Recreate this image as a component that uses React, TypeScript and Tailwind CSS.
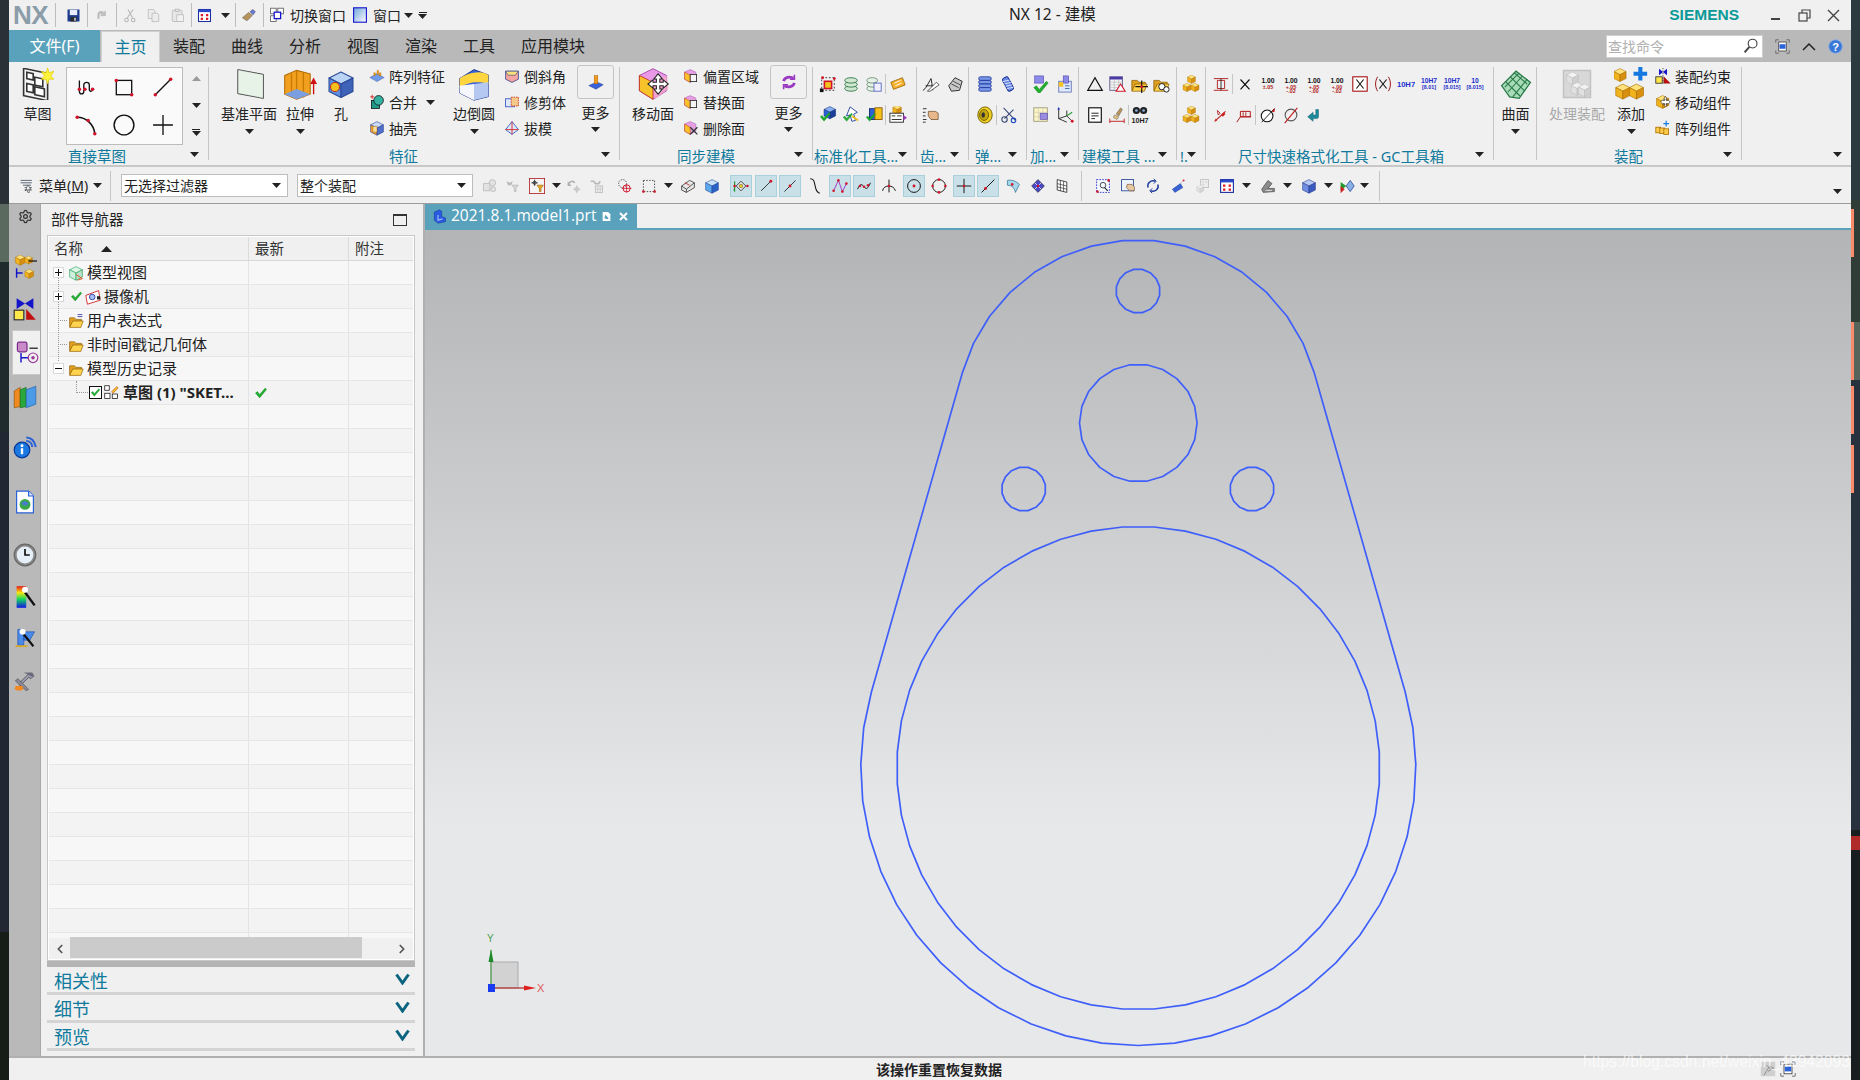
import React from 'react';
import { ChevronLeft, ChevronRight, Settings } from 'lucide-react';

type El = React.ReactNode;

const CJK = "font-['Noto_Sans','Noto_Sans_CJK_SC',sans-serif]";
const RED = '#d2142a';

const Cube = ({ t = '#ffe27a', l = '#f2b21c', r = '#d98f10', s = '#a86f00', x = 0, y = 0, k = 1 }: { t?: string; l?: string; r?: string; s?: string; x?: number; y?: number; k?: number }) => (
  <g transform={`translate(${x} ${y}) scale(${k})`} stroke={s} strokeWidth={0.7} strokeLinejoin="round">
    <polygon points="10,2 18,6 10,10 2,6" fill={t} />
    <polygon points="2,6 10,10 10,19 2,15" fill={l} />
    <polygon points="18,6 10,10 10,19 18,15" fill={r} />
  </g>
);

const Dot = ({ x, y, r = 1.6 }: { x: number; y: number; r?: number }) => <circle cx={x} cy={y} r={r} fill={RED} />;

const Check = ({ x = 0, y = 0, k = 1 }: { x?: number; y?: number; k?: number }) => (
  <path transform={`translate(${x} ${y}) scale(${k})`} d="M2 10l3-2 3 4 8-9 2 2-10 12z" fill="#1fae2e" stroke="#0d7a1a" strokeWidth={0.5} />
);

const Folder = ({ lines = false }: { lines?: boolean }) => (
  <>
    <path d="M2 6h6l2 2h7v3H6L3 17H2z" fill="#e0a020" stroke="#8a5a00" strokeWidth={0.8} />
    <path d="M6 10h13l-3 8H2z" fill="#ffd34d" stroke="#8a5a00" strokeWidth={0.8} />
    {lines && <path d="M12 2h6M12 4.5h6" stroke="#2a2a9a" strokeWidth={1} />}
  </>
);

const Tiny = ({ a, b, c, blue = false }: { a: string; b: string; c?: string; blue?: boolean }) => (
  <g fontFamily="Liberation Sans, sans-serif" fontWeight={700} textAnchor="middle">
    <text x="10" y="9" fontSize="7.5" fill={blue ? '#1c2ecc' : '#111'}>{a}</text>
    <text x="10" y="15" fontSize="6" fill={blue ? '#1c2ecc' : '#b01c1c'}>{b}</text>
    {c && <text x="10" y="20" fontSize="6" fill="#b01c1c">{c}</text>}
  </g>
);

const icons: Record<string, El> = {
  save: (
    <>
      <rect x="2" y="2" width="16" height="16" fill="#1c3a8a" />
      <rect x="5" y="2.5" width="10" height="7" fill="#e8eefc" />
      <rect x="6" y="12" width="8" height="6" fill="#2a2a2a" />
      <rect x="11" y="13" width="2" height="4" fill="#ddd" />
    </>
  ),
  undo: <path d="M4 15V9c0-3 3-5 6-4l3 1 2-2v7h-7l2-2-2-1c-1 0-2 1-2 2v5z" fill="#bfc0c0" stroke="#a8a8a8" strokeWidth={0.6} />,
  cut: (
    <g stroke="#b5b5b5" fill="none" strokeWidth={1.4}>
      <path d="M15 2L7 13M8 2l6 11" />
      <circle cx="6" cy="16" r="2.4" />
      <circle cx="15" cy="16" r="2.4" />
    </g>
  ),
  copy: (
    <g stroke="#b5b5b5" fill="#ececec">
      <path d="M3 2h7l2 2v10H3z" />
      <path d="M8 7h7l2 2v9H8z" />
    </g>
  ),
  paste: (
    <g stroke="#b5b5b5" fill="#e6e6e6">
      <rect x="3" y="3" width="13" height="15" rx="1" />
      <rect x="7" y="1.5" width="5" height="3" />
      <path d="M9 9h9v9H9z" fill="#f2f2f2" />
    </g>
  ),
  win: (
    <>
      <rect x="2" y="2" width="16" height="16" fill="#fff" stroke="#1a2fa0" strokeWidth={1.4} />
      <rect x="2" y="2" width="16" height="3.5" fill="#2a48c8" />
      <path d="M5 8h3v3H5zM12 8h3v3h-3zM5 13h3v3H5zM12 13h3v3h-3z" fill="#e02020" />
    </>
  ),
  brush: (
    <>
      <path d="M2 13l8-7 5 4-7 7z" fill="#b8935a" stroke="#555" strokeWidth={0.7} />
      <path d="M12 5l4-3 3 3-3 4z" fill="#6a7ee0" stroke="#334" strokeWidth={0.7} />
    </>
  ),
  switchwin: (
    <>
      <rect x="2" y="1.5" width="7" height="7" fill="#fff" stroke="#555" />
      <rect x="11" y="1.5" width="7" height="7" fill="#fff" stroke="#555" />
      <rect x="2" y="11" width="7" height="7" fill="#fff" stroke="#555" />
      <rect x="6.5" y="6.5" width="8" height="8" fill="#fff" stroke="#1414d0" strokeWidth={1.6} />
    </>
  ),
  winblue: (
    <>
      <defs>
        <linearGradient id="wb" x1="0" y1="0" x2="1" y2="1">
          <stop offset="0" stopColor="#6fa4d8" />
          <stop offset="1" stopColor="#fff" />
        </linearGradient>
      </defs>
      <rect x="2" y="1" width="16" height="18" fill="url(#wb)" stroke="#1414d0" strokeWidth={1.4} />
    </>
  ),
  sketch: (
    <>
      <g transform="skewY(12)" stroke="#333" fill="#f4f4f4">
        <rect x="1" y="0" width="15" height="17" />
        <rect x="3" y="2" width="4" height="4" fill="#fff" />
        <rect x="8" y="4" width="5" height="5" fill="#fff" />
        <rect x="3" y="9" width="4" height="5" fill="#fff" />
        <rect x="8" y="10" width="6" height="5" fill="#fff" />
      </g>
      <path d="M16 0l1 3 3-1-2 3 2 2-3 0-1 3-1-3-3 0 2-2-2-3 3 1z" fill="#fff23a" stroke="#d9c400" strokeWidth={0.4} />
    </>
  ),
  spline: (
    <>
      <path d="M4 4v10c0 3 4 3 4 0V8c0-3 5-3 5 0v4c0 3 3 2 3 0" fill="none" stroke="#111" strokeWidth={1.2} />
      <Dot x={4} y={12} /><Dot x={9} y={12} /><Dot x={16} y={12} />
    </>
  ),
  rect: (
    <>
      <rect x="3" y="4" width="14" height="13" fill="none" stroke="#111" strokeWidth={1.2} />
      <Dot x={3} y={4} /><Dot x={17} y={17} />
    </>
  ),
  line: (
    <>
      <path d="M3 17L17 3" stroke="#111" strokeWidth={1.2} />
      <Dot x={3} y={17} /><Dot x={17} y={3} />
    </>
  ),
  arc: (
    <>
      <path d="M2 3c8 0 15 6 16 15" fill="none" stroke="#111" strokeWidth={1.4} />
      <Dot x={2} y={3} /><Dot x={12} y={6} /><Dot x={18} y={18} />
    </>
  ),
  circle: <circle cx="10" cy="10" r="9" fill="none" stroke="#111" strokeWidth={1.3} />,
  plus: <path d="M10 1v18M1 10h18" stroke="#111" strokeWidth={1.2} />,
  plane: (
    <>
      <polygon points="3,1 19,4 19,19 3,16" fill="#dbeedb" stroke="#333" strokeWidth={0.6} />
      <polygon points="3,1 19,4 19,19 3,16" fill="#fff" opacity={0.3} />
    </>
  ),
  extrude: (
    <>
      <polygon points="1,5 8,2 16,4 16,16 8,19 1,16" fill="#f2a020" stroke="#b36a00" strokeWidth={0.6} />
      <path d="M8 2v17M5 4v14M12 3v15" stroke="#c97a00" strokeWidth={0.8} />
      <polygon points="1,16 8,19 16,16 8,13" fill="#7a9ee0" />
      <path d="M18 16V8m-1.6 2l1.6-3 1.6 3" stroke="#d01010" fill="#d01010" strokeWidth={0.8} />
    </>
  ),
  hole: (
    <>
      <Cube t="#b9d4f4" l="#5f8ee0" r="#3d62b8" s="#2a4a98" />
      <circle cx="6" cy="12" r="3" fill="#f6c21c" stroke="#c03018" strokeWidth={0.7} />
    </>
  ),
  pattern: (
    <>
      <polygon points="1,12 10,7 19,12 10,17" fill="#6f9be8" stroke="#2a4a98" strokeWidth={0.5} />
      <path d="M6 10V6h2v3zM10 8V3h2v5zM13 10V6h2v4z" fill="#f29a1c" stroke="#a86000" strokeWidth={0.4} />
    </>
  ),
  unite: (
    <>
      <path d="M4 1v5M1.5 3.5h5" stroke="#d01010" />
      <rect x="3" y="8" width="10" height="10" fill="#1f9a8a" stroke="#111" />
      <circle cx="12" cy="8" r="6" fill="#34b0a0" stroke="#111" />
    </>
  ),
  shell: (
    <>
      <Cube t="#c9d8f4" l="#f0a030" r="#4f6fc8" s="#26408a" />
      <rect x="5" y="8" width="5" height="7" fill="#f8e0a0" stroke="#a86000" strokeWidth={0.5} />
    </>
  ),
  blend: (
    <>
      <polygon points="2,7 10,2 18,5 18,17 10,19 2,15" fill="#3a62d8" stroke="#1d3488" strokeWidth={0.5} />
      <path d="M2 7c4-3 12-5 16-2v5c-5-2-12-1-16 2z" fill="#ffd640" />
      <polygon points="2,11 10,10 10,19 2,15" fill="#fff" opacity={0.95} />
      <polygon points="10,10 18,9 18,17 10,19" fill="#b5c8f2" />
    </>
  ),
  chamfer: (
    <>
      <polygon points="2,4 18,4 18,14 10,18 2,14" fill="#f6a6a0" stroke="#1d3488" strokeWidth={0.9} />
      <polygon points="2,4 18,4 14,9 5,9" fill="#ffe27a" stroke="#1d3488" strokeWidth={0.7} />
    </>
  ),
  trim: (
    <>
      <rect x="2" y="6" width="11" height="10" fill="#dfe7fb" stroke="#2a4ac0" />
      <rect x="9" y="4" width="9" height="11" fill="#f6c98a" stroke="#c03018" strokeDasharray="2 1" />
    </>
  ),
  draft: (
    <>
      <polygon points="10,2 18,12 10,18 2,12" fill="#dfe7fb" stroke="#2a4ac0" />
      <path d="M10 2v16M2 12h16" stroke="#d01010" strokeWidth={1} />
    </>
  ),
  more1: (
    <>
      <polygon points="2,14 11,10 18,13 10,18" fill="#3a62d8" stroke="#1d3488" strokeWidth={0.5} />
      <rect x="8" y="3" width="4" height="9" fill="#f29a1c" stroke="#a86000" strokeWidth={0.5} />
    </>
  ),
  moveface: (
    <>
      <polygon points="10,1 18,5 18,14 10,19 2,14 2,5" fill="#e89ae6" stroke="#a03aa8" strokeWidth={0.5} />
      <polygon points="2,5 10,9 10,19 2,14" fill="#f8c22a" stroke="#c03018" strokeWidth={0.5} />
      <polygon points="10,9 18,5 19,13 11,19" fill="#f4a6c8" opacity={0.8} />
      <path d="M14 7l2.5 3h-1.5v2h2v-1.5l3 2.5-3 2.5V14h-2v2h1.5L14 19l-2.5-3H13v-2h-2v1.5L8 13l3-2.500V12h2v-2h-1.500z" fill="#fff" stroke="#222" strokeWidth={0.6} transform="translate(-1 -3)" />
    </>
  ),
  facecube: (
    <>
      <polygon points="9,2 16,5 16,14 9,18 2,14 2,5" fill="#e4a0e0" stroke="#a03aa8" strokeWidth={0.5} />
      <polygon points="2,5 9,9 9,18 2,14" fill="#f8c22a" stroke="#c03018" strokeWidth={0.6} />
      <rect x="9" y="8" width="8" height="9" fill="#f4f4f4" stroke="#222" strokeWidth={1} />
    </>
  ),
  delface: (
    <>
      <polygon points="9,2 16,5 16,14 9,18 2,14 2,5" fill="#e4a0e0" stroke="#a03aa8" strokeWidth={0.5} />
      <polygon points="2,5 9,9 9,18 2,14" fill="#f8c22a" stroke="#c03018" strokeWidth={0.6} />
      <path d="M9 9l9 9M18 9l-9 9" stroke="#333" strokeWidth={1.6} />
    </>
  ),
  refresh: (
    <g fill="none" stroke="#9a3ac0" strokeWidth={3}>
      <path d="M4 9c1-4 7-6 11-3" />
      <path d="M16 11c-1 4-7 6-11 3" />
      <path d="M16 2v5h-5M4 18v-5h5" strokeWidth={1.8} />
    </g>
  ),
  redbox: (
    <>
      <rect x="3" y="3" width="14" height="14" fill="none" stroke="#333" strokeDasharray="2 2" />
      <rect x="6" y="7" width="8" height="8" fill="#f6c21c" stroke={RED} strokeWidth={1.8} />
      <rect x="1" y="15" width="4" height="4" fill="#111" />
      <Dot x={4} y={3} /><Dot x={17} y={4} />
    </>
  ),
  stack: (
    <g fill="#cfe8cf" stroke="#1f6a3a" strokeWidth={0.9}>
      <ellipse cx="10" cy="15" rx="7" ry="3" />
      <ellipse cx="10" cy="10.500" rx="7" ry="3" />
      <ellipse cx="10" cy="6" rx="7" ry="3" />
    </g>
  ),
  stack2: (
    <>
      <g fill="#e6f0e6" stroke="#4a7a5a" strokeWidth={0.8}>
        <ellipse cx="8" cy="15" rx="6" ry="3" />
        <ellipse cx="8" cy="10.500" rx="6" ry="3" />
        <ellipse cx="8" cy="6" rx="6" ry="3" />
      </g>
      <rect x="10" y="9" width="8" height="9" fill="#eef" stroke="#5a6ac0" />
    </>
  ),
  tag: (
    <>
      <path d="M2 8l13-5 3 8-13 5z" fill="#f6b02c" stroke="#8a5a00" strokeWidth={0.8} />
      <path d="M6 9l7-3M7 12l7-3" stroke="#fff" />
    </>
  ),
  bluecheck: (
    <>
      <Cube t="#8ab0f4" l="#2a62d8" r="#1d3e98" s="#102a70" x={4} y={-1} k={0.8} />
      <Check y={5} k={0.7} />
    </>
  ),
  axecheck: (
    <>
      <path d="M9 1l8 6-4 2 2 7-4 1-2-7-4 1z" fill="#fff" stroke="#1d3e98" />
      <path d="M11 11l7 5" stroke="#f0c020" strokeWidth={2} />
      <Check y={6} k={0.65} />
    </>
  ),
  cubecheck: (
    <>
      <rect x="5" y="3" width="8" height="12" fill="#2a62d8" stroke="#102a70" />
      <rect x="11" y="2" width="8" height="13" fill="#f6c21c" stroke="#8a5a00" />
      <Check y={6} k={0.65} />
    </>
  ),
  calc: (
    <>
      <Cube x={3} y={-2} k={0.6} />
      <rect x="1" y="8" width="15" height="10" fill="#fff" stroke="#222" />
      <path d="M3 11h4M9 11h5M3 15h11" stroke="#222" />
      <polygon points="16,10 20,13 16,16" fill="#a03ac0" />
    </>
  ),
  pen: (
    <>
      <path d="M1 17c3-1 6-8 9-13 1 3 1 8 2 13" fill="none" stroke="#222" strokeWidth={1.1} />
      <path d="M4 12h9" stroke="#222" />
      <path d="M6 18L16 8l3 3-10 7z" fill="#fff" stroke="#222" strokeWidth={0.8} />
    </>
  ),
  gearpen: (
    <>
      <polygon points="3,12 10,3 18,7 15,17 6,18" fill="#c8c8c8" stroke="#222" strokeWidth={1} />
      <path d="M6 10l8 4M8 7l8 4" stroke="#222" strokeWidth={0.8} />
    </>
  ),
  hand: (
    <>
      <path d="M1 3h4M1 7h3M1 11h3M1 15h4M1 18h3" stroke="#222" />
      <path d="M7 6h8l3 2v7h-8l-3-4z" fill="#e8b88a" stroke="#6a4a2a" strokeWidth={0.8} />
    </>
  ),
  coil: (
    <g fill="#7a9ae8" stroke="#1a2f98" strokeWidth={0.9}>
      <rect x="3" y="2" width="14" height="4" rx="2" />
      <rect x="3" y="6" width="14" height="4" rx="2" />
      <rect x="3" y="10" width="14" height="4" rx="2" />
      <rect x="3" y="14" width="14" height="4" rx="2" />
    </g>
  ),
  spring: (
    <g transform="rotate(-28 10 10)">
      <rect x="6.500" y="2" width="7" height="16" rx="2" fill="#6a8ae4" stroke="#1a2f98" />
      <path d="M6.500 5l7 2M6.500 8l7 2M6.500 11l7 2M6.500 14l7 2" stroke="#dfe7fb" />
    </g>
  ),
  washer: (
    <>
      <ellipse cx="10" cy="10" rx="8" ry="9" fill="#f0d020" stroke="#6a5a00" />
      <ellipse cx="9" cy="10" rx="5" ry="6" fill="#c8a810" stroke="#6a5a00" />
      <ellipse cx="8" cy="10" rx="2" ry="3" fill="#333" />
    </>
  ),
  scissor: (
    <g fill="none" stroke="#3a4a78" strokeWidth={1.2}>
      <path d="M4 2l13 14M15 4L5 14" />
      <circle cx="5" cy="15" r="3" />
      <circle cx="15" cy="16" r="2.500" stroke="#1a4ac0" />
    </g>
  ),
  vcheck: (
    <>
      <rect x="3" y="1" width="10" height="8" fill="#8a8ae8" stroke="#4a3aa8" strokeWidth={0.6} />
      <Check y={4} k={1} />
    </>
  ),
  clip: (
    <>
      <rect x="3" y="7" width="14" height="12" fill="#dfe7fb" stroke="#6a7ab8" />
      <rect x="8" y="1" width="6" height="8" fill="#8a8ae8" stroke="#4a3aa8" strokeWidth={0.6} />
      <rect x="3" y="8" width="5" height="5" fill="#f6c21c" />
      <path d="M10 12h5M10 15h5" stroke="#3a6a9a" />
    </>
  ),
  gridp: (
    <>
      <rect x="2" y="2" width="15" height="15" fill="#fff6c8" stroke="#9a9a7a" />
      <path d="M2 7h15M2 12h15M7 2v15M12 2v15" stroke="#c8c8b0" strokeWidth={0.7} />
      <rect x="9" y="8" width="8" height="7" fill="#9a8ae0" stroke="#4a3aa8" strokeWidth={0.6} />
    </>
  ),
  axes3: (
    <>
      <path d="M3 3v11l9-3 6 6M3 14l9 4M12 11V5" fill="none" stroke="#222" strokeWidth={1} />
      <path d="M12 11l6-4" stroke="#1f9a2e" strokeWidth={1.2} />
      <Dot x={18} y={17} /><path d="M3 1l-1.500 3h3z" fill="#1a2fc8" />
    </>
  ),
  tri: <polygon points="10,3 18,17 2,17" fill="none" stroke="#111" strokeWidth={1.4} />,
  table: (
    <>
      <rect x="2" y="2" width="14" height="15" fill="#f5f5f5" stroke="#5a5a8a" />
      <rect x="2" y="2" width="14" height="3" fill="#4a3aa8" />
      <path d="M2 8h14M2 11h14M2 14h14M7 5v12M12 5v12" stroke="#aaa" strokeWidth={0.6} />
      <polygon points="14,10 19,18 9,18" fill="#fff" stroke={RED} strokeWidth={1.200} />
    </>
  ),
  foldx: (
    <>
      <Folder />
      <path d="M6 13h14M13 6v14" stroke="#111" strokeWidth={1.3} />
      <Dot x={13} y={13} />
    </>
  ),
  foldc: (
    <>
      <Folder />
      <circle cx="11" cy="13" r="3.500" fill="#fff" stroke="#111" />
      <circle cx="16" cy="16" r="3" fill="#fff" stroke="#111" />
    </>
  ),
  note: (
    <>
      <rect x="3" y="2" width="14" height="16" fill="#fff" stroke="#111" strokeWidth={1.3} />
      <path d="M6 8h8M6 11h8M6 14h4" stroke="#111" />
    </>
  ),
  brushdim: (
    <>
      <path d="M9 9l5-7 2 2-4 7z" fill="#b8935a" stroke="#555" strokeWidth={0.5} />
      <path d="M7 10l5 2-2 3-4-2z" fill="#e8c07a" stroke="#555" strokeWidth={0.5} />
      <path d="M2 14v5M18 14v5M2 17h16" stroke="#c01818" />
    </>
  ),
  bino: (
    <>
      <circle cx="6" cy="5" r="4" fill="#222" />
      <circle cx="14" cy="5" r="4" fill="#222" />
      <circle cx="6" cy="5" r="1.500" fill="#8ab0e8" />
      <circle cx="14" cy="5" r="1.500" fill="#8ab0e8" />
      <text x="10" y="19" fontSize="8" fontWeight={700} textAnchor="middle" fontFamily="Liberation Sans, sans-serif" fill="#222">10H7</text>
    </>
  ),
  gold: (
    <>
      <Cube x={5} y={-1} k={0.55} />
      <Cube x={0} y={8} k={0.55} />
      <Cube x={9} y={8} k={0.55} />
    </>
  ),
  dimI: (
    <>
      <path d="M2 4h16M2 17h16M6 6h8v9H6z" fill="none" stroke="#b01818" />
      <path d="M10 4v13" stroke="#222" />
    </>
  ),
  bigX: <path d="M5 5l10 11M15 5L5 16" stroke="#111" strokeWidth={1.3} />,
  t1: <Tiny a="1.00" b="±.05" />,
  t2: <Tiny a="1.00" b="+.05" c="-.02" />,
  t3: <Tiny a="1.00" b="+.05" c="-.00" />,
  t4: <Tiny a="1.00" b="+.00" c="-.02" />,
  boxX: (
    <>
      <rect x="2" y="2" width="16" height="16" fill="#fff" stroke="#a01010" strokeWidth={1.2} />
      <path d="M6 5l8 10M14 5L6 15" stroke="#111" strokeWidth={1.2} />
    </>
  ),
  parX: (
    <>
      <path d="M4 2C1 7 1 13 4 18M16 2c3 5 3 11 0 16" fill="none" stroke="#a01010" strokeWidth={1.1} />
      <path d="M6 5l8 10M14 5L6 15" stroke="#111" strokeWidth={1.2} />
    </>
  ),
  h1: <text x="10" y="13" fontSize="8.500" fontWeight={700} textAnchor="middle" fontFamily="Liberation Sans, sans-serif" fill="#1c2ecc">10H7</text>,
  h2: <Tiny a="10H7" b="[8.01]" blue />,
  h3: <Tiny a="10H7" b="[8.015]" blue />,
  h4: <Tiny a="10" b="[8.015]" blue />,
  reddim: (
    <>
      <path d="M3 17L15 6" stroke="#b01818" strokeWidth={1.2} />
      <path d="M3 17l3-1-2-2zM10 10l2 2 3-3-2-2z" fill="#d02020" />
      <path d="M6 5l3 3-2 2z" fill="#fff" stroke="#b01818" />
    </>
  ),
  redflag: (
    <>
      <path d="M2 18l4-6h12M6 6h11v6H6z" fill="none" stroke="#b01818" strokeWidth={1.1} />
      <path d="M9 7v4M12 7v4" stroke="#b01818" />
    </>
  ),
  dia1: (
    <>
      <circle cx="9" cy="11" r="6.500" fill="#fff" stroke="#111" strokeWidth={1.2} />
      <path d="M3 18L17 3" stroke="#111" />
      <path d="M14 6l4-4-1 5z" fill="#c01818" />
    </>
  ),
  dia2: (
    <>
      <circle cx="10" cy="10" r="6.500" fill="none" stroke="#555" strokeWidth={1.2} />
      <path d="M3 19L17 2" stroke="#c01818" strokeWidth={1.2} />
    </>
  ),
  tealarrow: <path d="M15 4v8a2 2 0 0 1-2 2H9v3l-6-5 6-5v3h3V4z" fill="#1c8a9a" stroke="#0c5a68" strokeWidth={0.5} />,
  surface: (
    <>
      <polygon points="1,11 10,2 19,9 12,19 6,18" fill="#a8dcb8" stroke="#2a7a4a" strokeWidth={0.8} />
      <path d="M3.500 8.500l9 9M6.500 5.500l9 9M9 3l8 7M5 15l9-10M3 12L12 3M8 18L17 7" stroke="#2a7a4a" strokeWidth={0.7} />
    </>
  ),
  assemblyGray: (
    <>
      <rect x="1" y="1" width="18" height="18" fill="#d8d8d8" stroke="#c2c2c2" />
      <Cube t="#f2f2f2" l="#e0e0e0" r="#cfcfcf" s="#bcbcbc" x={2} y={1} k={0.5} />
      <Cube t="#f2f2f2" l="#e0e0e0" r="#cfcfcf" s="#bcbcbc" x={5} y={8} k={0.5} />
      <Cube t="#f2f2f2" l="#e0e0e0" r="#cfcfcf" s="#bcbcbc" x={10} y={9} k={0.5} />
    </>
  ),
  addcube: (
    <>
      <Cube x={-1} y={0} k={0.45} />
      <Cube x={0} y={9} k={0.52} />
      <Cube x={8} y={9} k={0.52} />
      <path d="M15.500 0v8M11.500 4h8" stroke="#1478e0" strokeWidth={2.4} />
    </>
  ),
  constraint: (
    <>
      <polygon points="5,1 10,5 5,9" fill="#1414c8" />
      <polygon points="15,1 10,5 15,9" fill="#1414c8" />
      <path d="M10 0v20" stroke="#333" strokeDasharray="1.500 1.500" />
      <rect x="1" y="11" width="8" height="8" fill="#ffe84a" stroke="#222" />
      <polygon points="11,11 19,19 11,19" fill="#c01010" stroke="#700" strokeWidth={0.5} />
    </>
  ),
  movecomp: (
    <>
      <Cube k={0.95} />
      <path d="M14 7l2 3h-1v2h2v-1l3 3-3 3v-1h-2v2h1l-2 2-2-2h1v-2h-2v1l-3-3 3-3v1h2v-2h-1z" fill="#fff" stroke="#111" strokeWidth={0.7} transform="translate(-1 -4)" />
    </>
  ),
  arrcomp: (
    <>
      <rect x="1" y="9" width="6" height="7" fill="#ffc94a" stroke="#a86f00" />
      <rect x="6" y="10" width="6" height="7" fill="#ffc94a" stroke="#a86f00" />
      <rect x="11" y="11" width="6" height="7" fill="#ffc94a" stroke="#a86f00" />
      <path d="M14 1v7M10.500 4.500h7" stroke="#1478e0" strokeWidth={1.4} />
    </>
  ),
  menu: (
    <>
      <path d="M2 3h14M2 6h14M5 9h10M7 12h9M7 15h9" stroke="#3a4a5a" />
      <path d="M11 9l4 5h-3l1 4-2 0-1-4-2 2z" fill="#fff" stroke="#222" strokeWidth={0.7} />
    </>
  ),
  g1: (
    <g fill="#e2e2e2" stroke="#b8b8b8">
      <rect x="2" y="7" width="8" height="9" />
      <circle cx="13" cy="6" r="4" />
      <circle cx="14" cy="14" r="3" />
    </g>
  ),
  g2: (
    <>
      <path d="M3 4l4 2 4-2-2 5H5z" fill="#b8b8b8" />
      <path d="M10 9h8l-3 4v4h-2v-4z" fill="#d8d8d8" stroke="#b8b8b8" />
    </>
  ),
  redfilter: (
    <>
      <rect x="0.500" y="0.500" width="19" height="19" fill="#f4f4f4" stroke="#b01818" />
      <path d="M3 6h8M7 2v8" stroke="#222" />
      <circle cx="7" cy="6" r="2" fill="none" stroke="#222" />
      <path d="M10 9h8l-3 4v4h-2v-4z" fill="#f2a91c" stroke="#8a5a00" strokeWidth={0.7} />
    </>
  ),
  g3: (
    <>
      <path d="M3 8c1-4 6-5 8-2" fill="none" stroke="#b0b0b0" strokeWidth={2} />
      <path d="M2 4v6h5z" fill="#b0b0b0" />
      <path d="M9 14h9M13.500 9v10" stroke="#bbb" />
      <circle cx="13.500" cy="14" r="2.500" fill="none" stroke="#bbb" />
    </>
  ),
  g4: (
    <>
      <path d="M2 4h4l2 3h4l2-3" stroke="#b8b8b8" fill="none" strokeWidth={2} />
      <rect x="8" y="10" width="9" height="8" fill="none" stroke="#b8b8b8" />
      <path d="M11 10v8M14 10v8M8 14h9" stroke="#c8c8c8" />
    </>
  ),
  ptcircle: (
    <>
      <circle cx="7" cy="7" r="5" fill="none" stroke="#222" strokeDasharray="1.500 1.500" />
      <circle cx="12" cy="13" r="4.500" fill="none" stroke={RED} strokeWidth={1.2} />
      <path d="M6 13h12M12 8v10" stroke={RED} />
    </>
  ),
  dots: (
    <>
      <rect x="3" y="3" width="14" height="14" fill="none" stroke="#222" strokeDasharray="1.800 1.800" />
      <Dot x={3} y={17} /><Dot x={17} y={17} />
    </>
  ),
  wire: (
    <>
      <polygon points="2,10 12,3 18,6 18,12 8,18 2,15" fill="#e8e8e8" stroke="#333" />
      <path d="M2 10l6 4 10-8M8 14v4" stroke="#333" fill="none" />
      <path d="M6 6l6 3" stroke="#c01818" />
    </>
  ),
  bluecube: <Cube t="#c8e4fa" l="#5ca8ec" r="#2a62c8" s="#2a4a98" />,
  gather: (
    <>
      <polygon points="10,4 16,10 10,16 4,10" fill="#e8e8e8" stroke="#222" />
      <circle cx="10" cy="10" r="2.200" fill="#f6d21c" stroke="#222" strokeWidth={0.5} />
      <path d="M2 4v12l-1-1" stroke="#1f9a2e" strokeWidth={1.4} />
      <Dot x={2} y={10} /><Dot x={18} y={10} />
    </>
  ),
  lineEnd: (
    <>
      <path d="M4 16L16 4" stroke="#111" />
      <Dot x={16} y={4} r={1.8} />
    </>
  ),
  lineMid: (
    <>
      <path d="M3 17L17 3" stroke="#111" />
      <Dot x={10} y={10} r={1.800} />
    </>
  ),
  sCurve: <path d="M4 1c5 0 5 4 6 8s1 9 6 10" fill="none" stroke="#111" strokeWidth={1.3} />,
  zig: (
    <>
      <path d="M2 16L8 3l5 14 5-10" fill="none" stroke="#a03ac0" strokeWidth={1.2} />
      <Dot x={2} y={16} /><Dot x={8} y={3} /><Dot x={13} y={17} /><Dot x={18} y={7} />
    </>
  ),
  wave: (
    <>
      <path d="M2 14c3-7 5-7 8-3s5 2 8-5" fill="none" stroke="#111" strokeWidth={1.2} />
      <Dot x={5} y={10} /><Dot x={10} y={11} /><Dot x={15} y={9} />
    </>
  ),
  tangent: (
    <>
      <path d="M2 16c1-8 14-8 16 0" fill="none" stroke="#111" strokeWidth={1.2} />
      <path d="M10 2v16" stroke="#111" strokeWidth={1.2} />
      <Dot x={10} y={10} />
    </>
  ),
  cCenter: (
    <>
      <circle cx="10" cy="10" r="8" fill="none" stroke="#111" strokeWidth={1.2} />
      <Dot x={10} y={10} r={1.800} />
    </>
  ),
  cQuad: (
    <>
      <circle cx="10" cy="10" r="8" fill="none" stroke="#111" strokeWidth={1.2} />
      <Dot x={10} y={2} /><Dot x={10} y={18} /><Dot x={2} y={10} /><Dot x={18} y={10} />
    </>
  ),
  cross: (
    <>
      <path d="M10 1v18M1 10h18" stroke="#111" strokeWidth={1.2} />
      <Dot x={10} y={10} />
    </>
  ),
  lineAny: (
    <>
      <path d="M2 18L18 2" stroke="#111" strokeWidth={1.2} />
      <Dot x={7} y={13} r={1.800} />
    </>
  ),
  patch: (
    <>
      <path d="M3 3c6-1 11 1 15 5l-5 10c-1-5-4-9-10-9z" fill="#a8d8ec" stroke="#3a7a98" />
      <Dot x={9} y={8} />
    </>
  ),
  facet: (
    <>
      <polygon points="10,2 18,10 10,18 2,10" fill="#4a4ac8" stroke="#222" strokeWidth={0.7} />
      <path d="M6 6l8 8M14 6l-8 8" stroke="#e8e8ff" />
      <Dot x={10} y={10} />
    </>
  ),
  grid3: (
    <>
      <polygon points="4,2 16,5 16,18 4,15" fill="#fff" stroke="#222" />
      <path d="M8 3v13M12 4v13M4 7l12 3M4 11l12 3" stroke="#222" strokeWidth={0.8} />
    </>
  ),
  fit: (
    <>
      <rect x="2" y="2" width="16" height="16" fill="#f4f8ff" stroke="#1414c8" strokeDasharray="2 1.500" />
      <circle cx="10" cy="9" r="3.500" fill="none" stroke="#222" />
      <path d="M12 12l4 4" stroke="#222" strokeWidth={1.4} />
      <Dot x={3} y={17} /><Dot x={17} y={3} />
    </>
  ),
  pan: (
    <>
      <rect x="2" y="2" width="15" height="14" fill="#eef2fa" stroke="#1a3a8a" />
      <path d="M9 8h6l3 3v5h-6l-4-4z" fill="#e8c8a0" stroke="#5a3a1a" strokeWidth={0.7} />
    </>
  ),
  rotate: (
    <g fill="none" stroke="#1a3a9a" strokeWidth={1.8}>
      <path d="M4 12c-2-5 3-10 9-8" />
      <path d="M16 8c2 5-3 10-9 8" />
      <path d="M11 1l3 3-3 3M9 13l-3 3 3 3" strokeWidth={1.2} />
    </g>
  ),
  persp: (
    <>
      <polygon points="3,14 13,7 16,12 6,18" fill="#3a62d8" stroke="#1a3a8a" strokeWidth={0.6} />
      <Dot x={17} y={3} r={1.200} />
      <path d="M14 6l2-2" stroke="#aaa" />
    </>
  ),
  viewgray: (
    <>
      <rect x="7" y="2" width="10" height="10" fill="#ececec" stroke="#bcbcbc" />
      <path d="M9 5h2M9 8h2M13 5h2" stroke="#bcbcbc" />
      <Cube t="#efefef" l="#e2e2e2" r="#d6d6d6" s="#bcbcbc" x={1} y={8} k={0.55} />
    </>
  ),
  scanner: (
    <>
      <polygon points="2,14 10,3 15,7 10,13 18,13 18,17 4,18" fill="#8a8a8a" stroke="#333" strokeWidth={0.7} />
      <ellipse cx="11" cy="15.500" rx="5" ry="1.500" fill="#d8d8d8" stroke="#333" strokeWidth={0.5} />
    </>
  ),
  viewcube: <Cube t="#b6c8f4" l="#6f8ee4" r="#3a5ac0" s="#2a3a88" />,
  flow: (
    <>
      <polygon points="2,5 9,10 2,16" fill="#1f9a2e" />
      <polygon points="2,10 7,14 2,19" fill="#d02020" />
      <polygon points="14,3 19,10 14,17 9,10" fill="#8ab0e8" stroke="#2a4a98" />
    </>
  ),
  partnav: (
    <>
      <Cube t="#dff6e6" l="#cfeedd" r="#b8e0c8" s="#0f9a4a" />
      <path d="M10 12l8 5-6 2" stroke="#e04a20" fill="none" strokeWidth={1.2} />
    </>
  ),
  camera: (
    <>
      <polygon points="1,8 17,2 19,14 3,19" fill="#fff" stroke="#d02020" strokeWidth={1.100} />
      <circle cx="9" cy="10" r="3.500" fill="#a8c0f0" stroke="#1a2fa0" />
      <rect x="15" y="9" width="4" height="4" fill="#222" />
    </>
  ),
  folder: <Folder />,
  folderExpr: <Folder lines />,
  sketchTree: (
    <>
      <rect x="1" y="1" width="6" height="6" fill="#fff" stroke="#111" />
      <rect x="1" y="11" width="7" height="7" fill="#fff" stroke="#111" />
      <rect x="11" y="12" width="7" height="6" fill="#fff" stroke="#111" />
      <path d="M10 9l7-7 2 2-7 7z" fill="#f2c21c" stroke="#b02020" strokeWidth={0.6} />
    </>
  ),
  navAsm: (
    <>
      <Cube x={1} y={-1} k={0.5} />
      <Cube x={9} y={0} k={0.4} />
      <path d="M3 11v8M3 15h5" stroke="#1414c8" strokeWidth={1.200} />
      <path d="M13 5h7" stroke="#111" />
      <Cube x={9} y={11} k={0.45} />
    </>
  ),
  navCons: (
    <>
      <polygon points="3,1 10,5.500 3,10" fill="#1414c8" />
      <polygon points="17,1 10,5.500 17,10" fill="#1414c8" />
      <rect x="1" y="11" width="8" height="8" fill="#ffe84a" stroke="#333" />
      <polygon points="11,10 19,19 11,19" fill="#c01010" />
    </>
  ),
  navPart: (
    <>
      <rect x="2" y="1" width="8" height="8" rx="1.500" fill="#c98ac8" stroke="#7a2a8a" />
      <path d="M5 10v8M5 14h6" stroke="#1414c8" strokeWidth={1.200} />
      <path d="M12 6h7" stroke="#111" />
      <circle cx="15" cy="14" r="4" fill="none" stroke="#9a3a9a" />
      <circle cx="15" cy="14" r="1.500" fill="#9a3a9a" />
    </>
  ),
  navBook: (
    <>
      <polygon points="1,5 6,2 6,18 1,19" fill="#f08a20" stroke="#8a4a00" strokeWidth={0.5} />
      <polygon points="6,4 11,2 11,18 6,19" fill="#2aa83a" stroke="#0a6a1a" strokeWidth={0.5} />
      <polygon points="11,4 19,1 19,16 11,19" fill="#4a9ae8" stroke="#1a5aa8" strokeWidth={0.5} />
    </>
  ),
  navInfo: (
    <>
      <path d="M11 2c4 0 7 3 8 8M11 5c3 0 5 2 5 5M11 8c1 0 2 1 2 2" fill="none" stroke="#2a62d8" strokeWidth={1.700} />
      <circle cx="7.500" cy="12.500" r="6.500" fill="#1a78e0" stroke="#0a3a98" />
      <rect x="6.500" y="11" width="2" height="5" fill="#fff" />
      <circle cx="7.500" cy="9" r="1.200" fill="#fff" />
    </>
  ),
  navDoc: (
    <>
      <path d="M3 1h10l4 4v14H3z" fill="#fff" stroke="#2a62d8" />
      <path d="M13 1v4h4" fill="#dfe7fb" stroke="#2a62d8" />
      <circle cx="10" cy="12" r="4.500" fill="#3aa84a" />
      <path d="M7 11c2-2 4-2 6 0-1 2-4 3-6 0z" fill="#4a7ad8" />
    </>
  ),
  navClock: (
    <>
      <circle cx="10" cy="10" r="9" fill="#8a8a8a" stroke="#666" />
      <circle cx="10" cy="10" r="7" fill="#e6eef8" />
      <path d="M10 5v5h4" stroke="#111" strokeWidth={1.400} fill="none" />
    </>
  ),
  navPalette: (
    <>
      <defs>
        <linearGradient id="rb" x1="0" y1="0" x2="0" y2="1">
          <stop offset="0" stopColor="#e81414" />
          <stop offset="0.300" stopColor="#f6e814" />
          <stop offset="0.600" stopColor="#14d85a" />
          <stop offset="1" stopColor="#1414e8" />
        </linearGradient>
      </defs>
      <rect x="3" y="1" width="8" height="18" fill="url(#rb)" />
      <path d="M10 6l8 11" stroke="#111" strokeWidth={2} />
      <circle cx="10" cy="4" r="2.500" fill="#fff" />
    </>
  ),
  navRole: (
    <>
      <path d="M4 2h5v13H4zM9 4h9l-4 7H9z" fill="#4a8ae8" stroke="#1a4aa8" strokeWidth={0.5} />
      <path d="M2 16h10" stroke="#d8a820" strokeWidth={1.400} />
      <path d="M8 5l9 11" stroke="#111" strokeWidth={1.800} />
      <circle cx="8" cy="4" r="2.500" fill="#fff" />
    </>
  ),
  navTools: (
    <>
      <path d="M5 12l8-8 4 2-2 2-2-1-7 7z" fill="#9a9ab0" stroke="#444" strokeWidth={0.6} />
      <path d="M9 3l7 0 2 3-3 0-2-1z" fill="#6a6a7a" />
      <path d="M4 8l9 9-2 1-9-8z" fill="#8a8a9a" stroke="#444" strokeWidth={0.5} />
      <ellipse cx="5" cy="16" rx="3.500" ry="2" fill="#f08a20" />
    </>
  ),
  tabCube: (
    <>
      <polygon points="3,4 10,1 13,3 13,10 18,12 18,17 8,19 3,15" fill="#2a5ae0" stroke="#10308a" strokeWidth={0.6} />
      <path d="M8 8v7l6-2" fill="none" stroke="#a8c4f8" strokeWidth={1.400} />
    </>
  ),
  docW: (
    <>
      <path d="M3 2h10l4 4v12H3z" fill="#fff" />
      <path d="M8 7l6 6-2 2-6-2z" fill="#5aa2bc" />
    </>
  ),
  mag: (
    <>
      <circle cx="12" cy="7" r="5.500" fill="#fff" stroke="#444" strokeWidth={1.400} />
      <path d="M8 11l-6 7" stroke="#444" strokeWidth={2.400} />
    </>
  ),
  screen: (
    <>
      <path d="M1 5V1h4M15 1h4v4M1 15v4h4M15 19h4v-4" fill="none" stroke="#555" />
      <rect x="5" y="4" width="10" height="12" fill="#fff" stroke="#333" />
      <rect x="6" y="7" width="8" height="6" fill="#2a62d8" />
    </>
  ),
  help: (
    <>
      <circle cx="10" cy="10" r="8" fill="#3a78d8" stroke="#8ab0e8" />
      <text x="10" y="15" fontSize="13" fontWeight={700} textAnchor="middle" fontFamily="Liberation Sans, sans-serif" fill="#fff">?</text>
    </>
  ),
  flagGray: (
    <>
      <rect x="1" y="1" width="18" height="18" fill="#c8c8c8" />
      <path d="M5 18L12 6l5 3-7 4M8 5l5 5" stroke="#666" fill="none" />
    </>
  ),
};

const Ic = ({ n, s = 18, h }: { n: string; s?: number; h?: number }) => (
  <svg width={s} height={h ?? s} viewBox="0 0 20 20" className="shrink-0" preserveAspectRatio="none">
    {icons[n]}
  </svg>
);

const Caret = ({ c = '#222' }: { c?: string }) => (
  <svg width="9" height="5" viewBox="0 0 9 5" className="shrink-0">
    <polygon points="0,0 9,0 4.500,5" fill={c} />
  </svg>
);

const Sep = ({ h = 'h-[24px]' }: { h?: string }) => <div className={`w-px bg-[#c6c6c6] ${h}`} />;

const Large = ({ icon, label, w, size = 34, drop = false, gray = false }: { icon: string; label: string; w: string; size?: number; drop?: boolean; gray?: boolean }) => (
  <div className={`flex flex-col items-center ${w}`}>
    <div className="h-[42px] flex items-center justify-center"><Ic n={icon} s={size} /></div>
    <div className={`h-[18px] leading-[18px] text-[14px] whitespace-nowrap ${gray ? 'text-[#a9a9a9]' : 'text-[#222]'}`}>{label}</div>
    {drop && <div className="mt-[6px]"><Caret /></div>}
  </div>
);

const SmallCol = ({ items, className }: { items: [string, string, boolean?][]; className: string }) => (
  <div className={`flex flex-col ${className}`}>
    {items.map(([icon, label, drop]) => (
      <div key={label} className="h-[26px] flex items-center">
        <div className="w-[20px] flex justify-center"><Ic n={icon} s={16} /></div>
        <span className="ml-[2px] text-[14px] text-[#222] whitespace-nowrap">{label}</span>
        {drop && <div className="ml-[9px]"><Caret /></div>}
      </div>
    ))}
  </div>
);

const MoreBtn = ({ icon }: { icon: string }) => (
  <div className="flex flex-col items-center w-[37px] pt-[2px]">
    <div className="w-[37px] h-[34px] border border-[#c4c4c4] rounded-[3px] flex items-center justify-center"><Ic n={icon} s={18} /></div>
    <div className="mt-[5px] h-[18px] leading-[18px] text-[14px] text-[#222] whitespace-nowrap">更多</div>
    <div className="mt-[5px]"><Caret /></div>
  </div>
);

const Group = ({ w, label, labelClass = 'justify-center', children }: { w: string; label: string; labelClass?: string; children: El }) => (
  <div className={`relative flex flex-col h-full ${w}`}>
    <div className="flex h-[87px] pt-[1px] overflow-visible">{children}</div>
    <div className={`h-[18px] leading-[18px] flex items-center ${labelClass} text-[14.500px] text-[#0f7a9c] whitespace-nowrap`}>{label}</div>
    {label !== '' && <div className="absolute right-[10px] bottom-[8px]"><Caret /></div>}
    <div className="absolute right-0 top-[5px] bottom-[5px] w-px bg-[#c6c6c6]" />
  </div>
);

const IconGrid = ({ rows, cell = 'w-[23px]', className = '' }: { rows: string[][]; cell?: string; className?: string }) => (
  <div className={`flex flex-col gap-[12px] pt-[11px] ${className}`}>
    {rows.map((row, i) => (
      <div key={i} className="flex items-center h-[19px]">
        {row.map((n, j) =>
          n === '|' ? (
            <Sep key={j} h="h-[20px]" />
          ) : (
            <div key={j} className={`flex justify-center ${cell}`}>{n !== '' && <Ic n={n} s={18} />}</div>
          ),
        )}
      </div>
    ))}
  </div>
);

const ToolBtn = ({ n, on = false, w = 'w-[24px]', s = 16 }: { n: string; on?: boolean; w?: string; s?: number }) => (
  <div className={`h-[24px] flex items-center justify-center ${w}`}>
    <div className={`h-[22px] w-[22px] flex items-center justify-center border ${on ? 'bg-[#c9e0e8] border-[#a8d0dc]' : 'border-transparent'}`}>
      <Ic n={n} s={s} />
    </div>
  </div>
);

const ToolCaret = () => <div className="w-[14px] flex justify-center"><Caret /></div>;

const QatSep = ({ className }: { className: string }) => <div className={`w-px h-[24px] bg-[#bdbdbd] shrink-0 ${className}`} />;

const TitleBar = () => (
  <div className="relative h-[30px] bg-[#f0f0f0] flex items-center pl-[4px]">
    <span className="font-['Liberation_Sans',sans-serif] font-bold text-[26px] tracking-[-0.5px] text-[#8c9daa] w-[38px]">NX</span>
    <QatSep className="ml-[4px]" />
    <div className="ml-[10px]"><Ic n="save" s={15} /></div>
    <QatSep className="ml-[6px]" />
    <div className="ml-[7px]"><Ic n="undo" s={14} /></div>
    <QatSep className="ml-[7px]" />
    <div className="ml-[5px] flex gap-[9px] items-center">
      <Ic n="cut" s={15} /><Ic n="copy" s={15} /><Ic n="paste" s={15} />
    </div>
    <QatSep className="ml-[6px]" />
    <div className="ml-[5px]"><Ic n="win" s={15} /></div>
    <div className="ml-[9px]"><Caret /></div>
    <QatSep className="ml-[5px]" />
    <div className="ml-[5px]"><Ic n="brush" s={15} /></div>
    <QatSep className="ml-[7px]" />
    <div className="ml-[5px]"><Ic n="switchwin" s={16} /></div>
    <span className="ml-[5px] text-[14px] text-[#222]">切换窗口</span>
    <div className="ml-[6px]"><Ic n="winblue" s={16} /></div>
    <span className="ml-[5px] text-[14px] text-[#222]">窗口</span>
    <div className="ml-[3px]"><Caret /></div>
    <div className="ml-[5px] flex flex-col items-center gap-[1px]">
      <div className="w-[8px] h-px bg-[#222]" />
      <Caret />
    </div>
    <span className="absolute left-[1000px] top-[3px] text-[15.500px] text-[#222]">NX 12 - 建模</span>
    <div className="ml-auto flex items-center pr-[3px]">
      <span className="font-['Liberation_Sans',sans-serif] font-bold text-[15.500px] text-[#0a9a98] mr-[22px]">SIEMENS</span>
      <div className="w-[29px] flex justify-center pt-[8px]"><div className="w-[9px] h-[2px] bg-[#444]" /></div>
      <div className="w-[29px] flex justify-center">
        <svg width="13" height="13" viewBox="0 0 13 13" fill="none" stroke="#444" strokeWidth="1.200"><rect x="1" y="4" width="8" height="8" /><path d="M4 4V1h8v8H9" /></svg>
      </div>
      <div className="w-[29px] flex justify-center">
        <svg width="13" height="13" viewBox="0 0 13 13" stroke="#444" strokeWidth="1.400"><path d="M1 1l11 11M12 1L1 12" /></svg>
      </div>
    </div>
  </div>
);

const TabsRow = () => (
  <div className="h-[32px] bg-[#b9b9b9] flex items-stretch text-[16px] text-[#222]">
    <div className="w-[91px] bg-[#5aa2bc] text-white flex items-center justify-center">文件(F)</div>
    <div className="ml-[1px] w-[59px] mt-px bg-[#f0f0f0] border-t border-x border-[#d0d0d0] text-[#0f7a9c] flex items-center justify-center">主页</div>
    {['装配', '曲线', '分析', '视图', '渲染', '工具'].map(t => (
      <div key={t} className="w-[58px] flex items-center justify-center">{t}</div>
    ))}
    <div className="ml-[13px] flex items-center">应用模块</div>
    <div className="ml-auto flex items-center pr-[3px]">
      <div className="w-[157px] h-[23px] bg-white border border-[#cfcfcf] flex items-center justify-between pl-px pr-[3px]">
        <span className="text-[14px] text-[#b0b0b0]">查找命令</span>
        <Ic n="mag" s={16} />
      </div>
      <div className="ml-[6px] w-[27px] flex justify-center"><Ic n="screen" s={15} /></div>
      <div className="w-[26px] flex justify-center">
        <svg width="14" height="9" viewBox="0 0 14 9" fill="none" stroke="#222" strokeWidth="1.500"><path d="M1 8l6-6 6 6" /></svg>
      </div>
      <div className="w-[26px] flex justify-center"><Ic n="help" s={17} /></div>
    </div>
  </div>
);

const Ribbon = () => (
  <div className="relative h-[105px] bg-[#f0f0f0] border-b-2 border-[#c8c8c8] flex">
    <Group w="w-[200px]" label="直接草图" labelClass="justify-start pl-[59px]">
      <Large icon="sketch" label="草图" w="w-[57px]" size={32} />
      <div className="w-[117px] h-[78px] mt-[4px] bg-[#fafafa] border border-[#bcbcbc] grid grid-cols-3 grid-rows-2 place-items-center">
        {['spline', 'rect', 'line', 'arc', 'circle', 'plus'].map(n => <Ic key={n} n={n} s={22} />)}
      </div>
      <div className="w-[26px] h-[78px] mt-[4px] flex flex-col items-center justify-between py-[9px]">
        <svg width="9" height="5" viewBox="0 0 9 5"><polygon points="0,5 9,5 4.500,0" fill="#9a9a9a" /></svg>
        <Caret />
        <div className="flex flex-col items-center gap-[1px]"><div className="w-[8px] h-px bg-[#222]" /><Caret /></div>
      </div>
    </Group>
    <Group w="w-[411px]" label="特征" labelClass="justify-start pl-[180px]">
      <div className="w-[6px]" />
      <Large icon="plane" label="基准平面" w="w-[68px]" size={32} drop />
      <Large icon="extrude" label="拉伸" w="w-[34px]" size={34} drop />
      <Large icon="hole" label="孔" w="w-[48px]" size={30} />
      <SmallCol className="w-[85px] pl-[2px]" items={[['pattern', '阵列特征'], ['unite', '合并', true], ['shell', '抽壳']]} />
      <Large icon="blend" label="边倒圆" w="w-[48px]" size={36} drop />
      <SmallCol className="w-[72px] pl-[4px]" items={[['chamfer', '倒斜角'], ['trim', '修剪体'], ['draft', '拔模']]} />
      <div className="w-[7px]" />
      <MoreBtn icon="more1" />
    </Group>
    <Group w="w-[193px]" label="同步建模" labelClass="justify-start pl-[57px]">
      <div className="w-[5px]" />
      <Large icon="moveface" label="移动面" w="w-[56px]" size={34} />
      <SmallCol className="w-[89px]" items={[['facecube', '偏置区域'], ['facecube', '替换面'], ['delface', '删除面']]} />
      <MoreBtn icon="refresh" />
    </Group>
    <Group w="w-[104px]" label="标准化工具..." labelClass="justify-start pl-px">
      <IconGrid className="pl-[3px]" rows={[['redbox', 'stack', 'stack2', '|', 'tag'], ['bluecheck', 'axecheck', 'cubecheck', '|', 'calc']]} />
    </Group>
    <Group w="w-[52px]" label="齿..." labelClass="justify-start pl-[3px]">
      <IconGrid cell="w-[24px]" className="pl-[2px]" rows={[['pen', 'gearpen'], ['hand']]} />
    </Group>
    <Group w="w-[58px]" label="弹..." labelClass="justify-start pl-[6px]">
      <IconGrid className="pl-[4px]" cell="w-[23px]" rows={[['coil', 'spring'], ['washer', '|', 'scissor']]} />
    </Group>
    <Group w="w-[52px]" label="加..." labelClass="justify-start pl-[3px]">
      <IconGrid cell="w-[24px]" className="pl-[2px]" rows={[['vcheck', 'clip'], ['gridp', 'axes3']]} />
    </Group>
    <Group w="w-[98px]" label="建模工具 ..." labelClass="justify-start pl-[3px]">
      <IconGrid cell="w-[22px]" className="pl-[5px]" rows={[['tri', 'table', 'foldx', 'foldc'], ['note', 'brushdim', '|', 'bino']]} />
    </Group>
    <Group w="w-[29px]" label="!." labelClass="justify-start pl-[3px]">
      <IconGrid cell="w-[28px]" rows={[['gold'], ['gold']]} />
    </Group>
    <Group w="w-[288px]" label="尺寸快速格式化工具 - GC工具箱" labelClass="justify-start pl-[32px]">
      <IconGrid
        cell="w-[23px]"
        className="pl-[3px]"
        rows={[
          ['dimI', '|', 'bigX', 't1', 't2', 't3', 't4', 'boxX', 'parX', 'h1', 'h2', 'h3', 'h4'],
          ['reddim', 'redflag', '|', 'dia1', 'dia2', 'tealarrow'],
        ]}
      />
    </Group>
    <Group w="w-[43px]" label="">
      <Large icon="surface" label="曲面" w="w-[43px]" size={32} drop />
    </Group>
    <Group w="w-[205px]" label="装配" labelClass="justify-start pl-[77px]">
      <Large icon="assemblyGray" label="处理装配" w="w-[80px]" size={30} gray />
      <Large icon="addcube" label="添加" w="w-[28px]" size={34} drop />
      <SmallCol className="pl-[8px]" items={[['constraint', '装配约束'], ['movecomp', '移动组件'], ['arrcomp', '阵列组件']]} />
    </Group>
    <div className="absolute right-[9px] bottom-[8px]"><Caret /></div>
  </div>
);

const SelectBox = ({ w, text }: { w: string; text: string }) => (
  <div className={`h-[23px] bg-white border border-[#bdbdbd] flex items-center justify-between pl-[2px] pr-[6px] text-[14px] text-[#222] ${w}`}>
    <span>{text}</span>
    <Caret />
  </div>
);

const SelectBar = () => (
  <div className="relative h-[37px] bg-[#f0f0f0] border-b border-[#9c9c9c] flex items-center pl-[10px] pt-[1px]">
    <Ic n="menu" s={16} />
    <span className="ml-[4px] text-[14px] text-[#222]">菜单(<span className="underline">M</span>)</span>
    <div className="ml-[5px]"><Caret /></div>
    <div className="ml-[8px] w-px h-[30px] bg-[#c6c6c6]" />
    <div className="ml-[10px]"><SelectBox w="w-[167px]" text="无选择过滤器" /></div>
    <div className="ml-[9px]"><SelectBox w="w-[176px]" text="整个装配" /></div>
    <div className="ml-[5px] flex items-center">
      <ToolBtn n="g1" />
      <ToolBtn n="g2" w="w-[20px]" />
      <div className="ml-[3px]"><ToolBtn n="redfilter" /></div>
      <ToolCaret />
      <ToolBtn n="g3" w="w-[22px]" />
      <ToolBtn n="g4" />
      <div className="ml-[4px]"><ToolBtn n="ptcircle" /></div>
      <ToolBtn n="dots" />
      <div className="w-[14px] flex justify-center"><Caret /></div>
      <div className="ml-px"><ToolBtn n="wire" /></div>
      <ToolBtn n="bluecube" />
      <div className="ml-[4px] flex">
        <ToolBtn n="gather" on w="w-[25px]" />
        <ToolBtn n="lineEnd" on w="w-[25px]" />
        <ToolBtn n="lineMid" on />
        <ToolBtn n="sCurve" w="w-[25px]" />
        <ToolBtn n="zig" on w="w-[25px]" />
        <ToolBtn n="wave" on />
        <ToolBtn n="tangent" w="w-[25px]" />
        <ToolBtn n="cCenter" on w="w-[25px]" />
        <ToolBtn n="cQuad" w="w-[25px]" />
        <ToolBtn n="cross" on w="w-[25px]" />
        <ToolBtn n="lineAny" on />
        <ToolBtn n="patch" w="w-[25px]" />
        <ToolBtn n="facet" w="w-[25px]" />
        <ToolBtn n="grid3" />
      </div>
      <div className="ml-[7px] w-px h-[30px] bg-[#c6c6c6] mr-[8px]" />
      <ToolBtn n="fit" w="w-[25px]" />
      <ToolBtn n="pan" w="w-[25px]" />
      <ToolBtn n="rotate" w="w-[25px]" />
      <ToolBtn n="persp" w="w-[25px]" />
      <ToolBtn n="viewgray" w="w-[25px]" />
      <ToolBtn n="win" />
      <ToolCaret />
      <div className="ml-[2px]"><ToolBtn n="scanner" w="w-[25px]" /></div>
      <ToolCaret />
      <div className="ml-[2px]"><ToolBtn n="viewcube" w="w-[25px]" /></div>
      <ToolCaret />
      <div className="ml-[2px]"><ToolBtn n="flow" w="w-[20px]" /></div>
      <ToolCaret />
      <div className="ml-[8px] w-px h-[30px] bg-[#c6c6c6]" />
    </div>
    <div className="absolute right-[9px] bottom-[9px]"><Caret /></div>
  </div>
);

const railItems: { n: string; cls: string; active?: boolean }[] = [
  { n: 'navAsm', cls: 'h-[42px] mt-[4px]' },
  { n: 'navCons', cls: 'h-[42px]' },
  { n: 'navPart', cls: 'h-[45px]', active: true },
  { n: 'navBook', cls: 'h-[44px]' },
  { n: 'navInfo', cls: 'h-[56px]' },
  { n: 'navDoc', cls: 'h-[54px]' },
  { n: 'navClock', cls: 'h-[52px]' },
  { n: 'navPalette', cls: 'h-[32px]' },
  { n: 'navRole', cls: 'h-[52px]' },
  { n: 'navTools', cls: 'h-[32px]' },
];

const Rail = () => (
  <div className="w-[32px] bg-[#b9b9b9] border-r border-[#a8a8a8] flex flex-col shrink-0">
    <div className="h-[38px] pl-[9px] pt-[5px]"><Settings size={15} color="#333" /></div>
    {railItems.map(it => (
      <div
        key={it.n}
        className={`flex items-center justify-center ${it.cls} ${it.active ? 'ml-[3px] bg-[#f0f0f0] border-y border-l border-[#c8c8c8]' : 'ml-px'}`}
      >
        <Ic n={it.n} s={24} />
      </div>
    ))}
  </div>
);

const Expander = ({ minus = false }: { minus?: boolean }) => (
  <div className="relative z-10 w-[11px] h-[11px] bg-white border border-[#d8d8d8] flex items-center justify-center">
    <svg width="9" height="9" viewBox="0 0 9 9" stroke="#111">
      <path d="M1 4.500h7" />
      {!minus && <path d="M4.500 1v7" />}
    </svg>
  </div>
);

const treeRows: { text: string; icon?: string; check?: boolean; expand?: 'plus' | 'minus'; bold?: boolean }[] = [
  { text: '模型视图', icon: 'partnav', expand: 'plus' },
  { text: '摄像机', icon: 'camera', check: true, expand: 'plus' },
  { text: '用户表达式', icon: 'folderExpr' },
  { text: '非时间戳记几何体', icon: 'folder' },
  { text: '模型历史记录', icon: 'folder', expand: 'minus' },
  { text: '草图 (1) "SKET...', icon: 'sketchTree', bold: true },
];

const TreeRow = ({ i }: { i: number }) => {
  const row = treeRows[i];
  return (
    <div className={`h-[24px] flex border-b border-[#e6e6e6] ${i % 2 === 0 ? 'bg-[#f7f7f7]' : 'bg-[#f3f3f3]'}`}>
      <div className="relative w-[200px] border-r border-[#e4e4e4] flex items-center pl-[4px] text-[15px] text-[#222] whitespace-nowrap">
        {row && !row.bold && (
          <>
            <div className="w-[11px] flex justify-center">{row.expand && <Expander minus={row.expand === 'minus'} />}</div>
            {!row.expand && <div className="absolute left-[9px] w-[9px] border-t border-dotted border-[#999]" />}
            {row.check && <div className="ml-[6px]"><svg width="13" height="13" viewBox="0 0 20 20"><Check /></svg></div>}
            <div className={row.check ? 'ml-[2px]' : 'ml-[4px]'}><Ic n={row.icon ?? ''} s={16} /></div>
            <span className="ml-[3px]">{row.text}</span>
          </>
        )}
        {row && row.bold && (
          <>
            <div className="absolute left-[27px] top-0 h-[12px] w-[12px] border-l border-b border-dotted border-[#999]" />
            <div className="ml-[36px] w-[13px] h-[13px] bg-white border border-[#111] flex items-center justify-center">
              <svg width="11" height="11" viewBox="0 0 20 20"><Check /></svg>
            </div>
            <div className="ml-[2px]"><Ic n="sketchTree" s={15} /></div>
            <span className="ml-[4px] font-bold">{row.text}</span>
          </>
        )}
      </div>
      <div className="w-[100px] border-r border-[#e4e4e4] flex items-center pl-[5px]">
        {row?.bold && <svg width="14" height="14" viewBox="0 0 20 20"><Check /></svg>}
      </div>
      <div className="flex-1" />
    </div>
  );
};

const Accordion = ({ label }: { label: string }) => (
  <div className="h-[28px] ml-[6px] w-[368px] border-b-[3px] border-[#d4d4d4] flex items-center justify-between pt-[3px] pl-[7px] pr-[5px] text-[18px] text-[#0f7a9c]">
    <span>{label}</span>
    <svg width="15" height="12" viewBox="0 0 15 12" fill="none" stroke="#0a6480" strokeWidth="3" className="mb-[5px]">
      <path d="M1.500 1.500L7.500 10l6-8.500" />
    </svg>
  </div>
);

const NavPanel = () => (
  <div className="w-[384px] bg-[#f0f0f0] border-r-2 border-[#b0b0b0] flex flex-col shrink-0">
    <div className="h-[31px] flex items-center justify-between pl-[10px] pr-[16px] text-[14.500px] text-[#222]">
      <span>部件导航器</span>
      <div className="w-[14px] h-[12px] border border-[#333] border-t-2" />
    </div>
    <div className="relative ml-[6px] w-[368px] h-[726px] border border-[#c8c8c8] bg-white p-px flex flex-col overflow-hidden">
      <div className="h-[24px] flex bg-[#f0f0f0] border-b border-[#d8d8d8] text-[14.500px] text-[#333]">
        <div className="w-[200px] border-r border-[#dcdcdc] flex items-center pl-[5px]">
          <span>名称</span>
          <svg width="11" height="6" viewBox="0 0 11 6" className="ml-[18px]"><polygon points="0,6 11,6 5.500,0" fill="#222" /></svg>
        </div>
        <div className="w-[100px] border-r border-[#dcdcdc] flex items-center pl-[6px]">最新</div>
        <div className="flex-1 flex items-center pl-[6px]">附注</div>
      </div>
      <div className="relative flex-1 overflow-hidden">
        <div className="absolute left-[9px] top-[16px] h-[84px] border-l border-dotted border-[#999]" />
        {Array.from({ length: 29 }).map((_, i) => <TreeRow key={i} i={i} />)}
      </div>
      <div className="h-[21px] bg-[#f0f0f0] flex items-center justify-between px-[4px]">
        <ChevronLeft size={14} strokeWidth={3} color="#555" />
        <div className="absolute left-[22px] bottom-[2px] w-[292px] h-[21px] bg-[#cbcbcb]" />
        <ChevronRight size={14} strokeWidth={3} color="#555" />
      </div>
    </div>
    <div className="ml-[6px] w-[368px] h-[6px] bg-[#b4b4b4]" />
    <Accordion label="相关性" />
    <Accordion label="细节" />
    <Accordion label="预览" />
  </div>
);

const arc = (cx: number, cy: number, r: number, a0: number, a1: number, n: number) => {
  const pts: string[] = [];
  for (let i = 0; i <= n; i++) {
    const a = ((a0 + ((a1 - a0) * i) / n) * Math.PI) / 180;
    pts.push(`${(cx + r * Math.cos(a)).toFixed(1)},${(cy + r * Math.sin(a)).toFixed(1)}`);
  }
  return pts.join(' ');
};

const CX = 1138.3;
const outline = `${arc(CX, 423, 183, 195.9, 344.1, 15)} ${arc(CX, 768, 277.5, 344.1, 555.9, 28)}`;
const ring = (cx: number, cy: number, r: number, n: number) => arc(cx, cy, r, 180 / n - 90, 360 + 180 / n - 90, n);

const Part = () => (
  <svg className="w-full h-full" viewBox="425 230 1426 826" preserveAspectRatio="none">
    <g fill="none" stroke="#3f5ffa" strokeWidth={1.7} strokeLinejoin="round">
      <polygon points={outline} />
      <polygon points={ring(CX, 768, 241.5, 48)} />
      <polygon points={ring(CX, 423, 58.8, 22)} />
      <polygon points={ring(1138, 291, 22, 16)} />
      <polygon points={ring(1023.7, 489, 22, 16)} />
      <polygon points={ring(1252, 489, 22, 16)} />
    </g>
    <rect x="491" y="962" width="27" height="26" fill="#d2d2d3" stroke="#a9a9aa" />
    <path d="M491 988V950" stroke="#3a9a3a" strokeWidth={1} />
    <polygon points="491,949 488.500,962 493.500,962" fill="#1f8a2a" />
    <path d="M491 988h36" stroke="#b84a4a" strokeWidth={1.500} />
    <polygon points="536,988 524,985.500 524,990.500" fill="#e02020" />
    <rect x="488" y="984" width="7" height="8" fill="#1a3af0" />
    <text x="487" y="942" fontSize="10" fill="#4aa04a" fontFamily="Liberation Sans, sans-serif">Y</text>
    <text x="537" y="992" fontSize="11" fill="#e05a5a" fontFamily="Liberation Sans, sans-serif">X</text>
  </svg>
);

const Canvas = () => (
  <div className="flex-1 flex flex-col min-w-0">
    <div className="h-[24px] bg-[#f0f0f0] flex items-stretch">
      <div className="w-[212px] bg-[#5aa2bc] flex items-center pl-[7px] text-white">
        <Ic n="tabCube" s={15} />
        <span className="ml-[4px] text-[15.500px] font-['Open_Sans',sans-serif]">2021.8.1.model1.prt</span>
        <div className="ml-[5px]"><Ic n="docW" s={11} /></div>
        <svg width="9" height="9" viewBox="0 0 9 9" stroke="#fff" strokeWidth="2" className="ml-[7px]"><path d="M1 1l7 7M8 1L1 8" /></svg>
      </div>
    </div>
    <div className="h-[2px] bg-[#5aa2bc]" />
    <div className="flex-1 min-h-0 bg-[linear-gradient(180deg,#b3b4b6_0%,#e7e8ea_72%)]">
      <Part />
    </div>
  </div>
);

const StatusBar = () => (
  <div className="relative h-[24px] bg-[#f0f0f0] border-t-2 border-[#b0b0b0] flex items-center justify-center">
    <span className="ml-[18px] text-[14px] font-bold text-[#222]">该操作重置恢复数据</span>
    <div className="absolute right-[75px] top-[3px] opacity-80"><Ic n="flagGray" s={16} /></div>
    <div className="absolute right-[55px] top-[3px]"><Ic n="screen" s={16} /></div>
    <span className="absolute right-[1px] top-[-8px] font-['Liberation_Sans',sans-serif] text-[15.700px] text-white/70 whitespace-nowrap">https://blog.csdn.net/weixin_43942093</span>
  </div>
);

const Strip = ({ blocks }: { blocks: [string, string][] }) => (
  <div className="w-[9px] h-full flex flex-col shrink-0">
    {blocks.map(([h, c], i) => <div key={i} className={`${h} ${c}`} />)}
  </div>
);

const App = () => (
  <div className={`w-[1860px] h-[1080px] flex overflow-hidden ${CJK}`}>
    <Strip
      blocks={[
        ['h-[204px]', 'bg-[#2a3238]'],
        ['h-[58px]', 'bg-[#5b6a5f]'],
        ['h-[170px]', 'bg-[#1f2b2c]'],
        ['h-[500px]', 'bg-[#212833]'],
        ['h-[148px]', 'bg-[#161c16]'],
      ]}
    />
    <div className="w-[1842px] h-full flex flex-col">
      <TitleBar />
      <TabsRow />
      <Ribbon />
      <SelectBar />
      <div className="flex-1 min-h-0 flex">
        <Rail />
        <NavPanel />
        <Canvas />
      </div>
      <StatusBar />
    </div>
    <div className="relative w-[9px] h-full shrink-0">
      <Strip
        blocks={[
          ['h-[200px]', 'bg-[#2a3a3e]'],
          ['h-[122px]', 'bg-[#2f3d36]'],
          ['h-[58px]', 'bg-[#56645c]'],
          ['h-[450px]', 'bg-[#28323e]'],
          ['h-[250px]', 'bg-[#181d20]'],
        ]}
      />
      {[
        'top-[209px] h-[48px]',
        'top-[322px] h-[58px]',
        'top-[386px] h-[48px]',
        'top-[445px] h-[48px]',
      ].map(c => <div key={c} className={`absolute left-0 w-[3px] bg-[#fb8a6a] ${c}`} />)}
      <div className="absolute left-0 top-[836px] w-[9px] h-[14px] bg-[#b02a2a]" />
    </div>
  </div>
);

export default App;
